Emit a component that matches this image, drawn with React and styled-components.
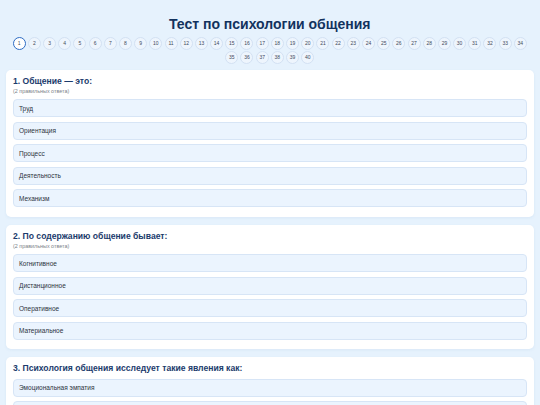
import React from "react";
import styled, { createGlobalStyle } from "styled-components";

const Global = createGlobalStyle`
  html, body { margin: 0; padding: 0; background: #e6f2fd; }
  body { font-family: "Liberation Sans", Arial, sans-serif; }
`;

const Page = styled.div`
  padding: 13.5px 6.5px 20px 6px;
  display: flex;
  flex-direction: column;
  align-items: stretch;
`;

const Title = styled.h1`
  margin: 0;
  font-size: 14px;
  line-height: 20px;
  font-weight: 700;
  text-align: center;
  color: #12325e;
`;

const Nav = styled.div`
  margin: 3.5px 0 5.6px;
  display: flex;
  flex-wrap: wrap;
  justify-content: center;
  gap: 1.4px 2.2px;
`;

const Dot = styled.button`
  box-sizing: border-box;
  width: 13px;
  height: 13px;
  padding: 0;
  border-radius: 50%;
  border: ${(p) => (p.$active ? "1.5px solid #2d6cc4" : "0.8px solid #d3e1f3")};
  background: ${(p) => (p.$active ? "#ffffff" : "#eef5fd")};
  color: #3f4a5a;
  font-family: "Liberation Sans", Arial, sans-serif;
  font-size: 5px;
  line-height: 1;
  display: flex;
  align-items: center;
  justify-content: center;
`;

const Card = styled.section`
  background: #ffffff;
  border-radius: 5px;
  padding: 6px 7px 9.5px;
  margin-bottom: 8px;
  box-shadow: 0 1px 3px rgba(60, 110, 170, 0.08);
`;

const QTitle = styled.h2`
  margin: 0;
  font-size: 8.6px;
  line-height: 11px;
  font-weight: 700;
  color: #1b3b6c;
`;

const QHint = styled.div`
  margin: 1px 0 1.5px;
  font-size: 5.4px;
  line-height: 7px;
  color: #7a7f88;
`;

const Options = styled.div`
  margin-top: 4.5px;
  display: flex;
  flex-direction: column;
  gap: 4.5px;
`;

const Option = styled.div`
  box-sizing: border-box;
  height: 18px;
  padding: 0 5px;
  display: flex;
  align-items: center;
  border-radius: 4px;
  background: #ebf4fe;
  border: 1px solid #d7e5f6;
  font-size: 6.5px;
  color: #2c3340;
`;

const questions = [
  {
    title: "1. Общение — это:",
    hint: "(2 правильных ответа)",
    options: ["Труд", "Ориентация", "Процесс", "Деятельность", "Механизм"],
  },
  {
    title: "2. По содержанию общение бывает:",
    hint: "(2 правильных ответа)",
    options: ["Когнитивное", "Дистанционное", "Оперативное", "Материальное"],
  },
  {
    title: "3. Психология общения исследует такие явления как:",
    options: ["Эмоциональная эмпатия", "Социальная перцепция", "Межличностное восприятие"],
  },
];

export default function App() {
  return (
    <>
      <Global />
      <Page>
        <Title>Тест по психологии общения</Title>
        <Nav>
          {Array.from({ length: 40 }, (_, i) => (
            <Dot key={i} $active={i === 0}>
              {i + 1}
            </Dot>
          ))}
        </Nav>
        {questions.map((q) => (
          <Card key={q.title}>
            <QTitle>{q.title}</QTitle>
            {q.hint && <QHint>{q.hint}</QHint>}
            <Options>
              {q.options.map((o) => (
                <Option key={o}>{o}</Option>
              ))}
            </Options>
          </Card>
        ))}
      </Page>
    </>
  );
}
